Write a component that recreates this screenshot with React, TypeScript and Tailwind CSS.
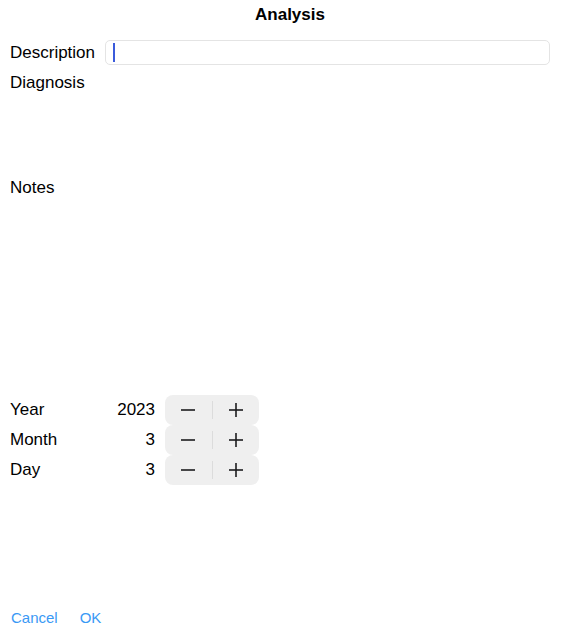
import React from "react";

const font = { fontFamily: '"Liberation Sans", Arial, sans-serif' };

function Minus() {
  return (
    <svg width="16" height="16" viewBox="0 0 16 16">
      <line x1="1" y1="8" x2="15" y2="8" stroke="#1c1c1e" strokeWidth="1.6" />
    </svg>
  );
}
function Plus() {
  return (
    <svg width="16" height="16" viewBox="0 0 16 16">
      <line x1="1" y1="8" x2="15" y2="8" stroke="#1c1c1e" strokeWidth="1.6" />
      <line x1="8" y1="1" x2="8" y2="15" stroke="#1c1c1e" strokeWidth="1.6" />
    </svg>
  );
}

function StepperRow({ label, value }: { label: string; value: string }) {
  return (
    <div className="flex h-[30px] items-center">
      <div className="w-[100px] shrink-0 pl-[10px] text-[17px] text-black">{label}</div>
      <div className="w-[55px] shrink-0 text-right text-[17px] text-black">{value}</div>
      <div className="ml-[10px] flex h-[30px] w-[94px] items-center rounded-[8px] bg-[#efefef]">
        <div className="flex flex-1 items-center justify-center">
          <Minus />
        </div>
        <div className="h-[18px] w-px bg-[#dcdcdc]" />
        <div className="flex flex-1 items-center justify-center">
          <Plus />
        </div>
      </div>
    </div>
  );
}

export default function App() {
  return (
    <div className="flex h-[640px] w-[580px] flex-col bg-white text-black" style={font}>
      <div className="flex h-[30px] items-center justify-center text-[17px] font-bold">Analysis</div>
      <div className="mt-[10px] flex h-[25px] items-center">
        <div className="w-[105px] shrink-0 pl-[10px] text-[17px]">Description</div>
        <div className="mr-[30px] flex h-[25px] flex-1 items-center rounded-[5px] border border-[#e4e4e4] pl-[7px]">
          <div className="h-[19px] w-[2px] bg-[#3b5bdb]" />
        </div>
      </div>
      <div className="mt-[5px] flex h-[25px] items-center pl-[10px] text-[17px]">Diagnosis</div>
      <div className="h-[80px]" />
      <div className="flex h-[25px] items-center pl-[10px] text-[17px]">Notes</div>
      <div className="h-[195px]" />
      <StepperRow label="Year" value="2023" />
      <StepperRow label="Month" value="3" />
      <StepperRow label="Day" value="3" />
      <div className="flex-1" />
      <div className="mb-[9px] flex h-[25px] items-center gap-[22px] pl-[11px] text-[15px] text-[#3a99f5]">
        <span>Cancel</span>
        <span>OK</span>
      </div>
    </div>
  );
}
